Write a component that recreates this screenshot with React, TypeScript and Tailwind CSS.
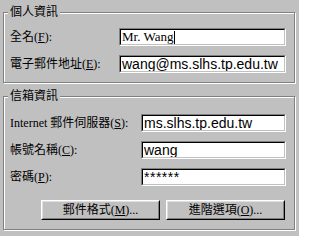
import React from "react";

const labelFont = { fontFamily: '"Liberation Serif", "Noto Sans CJK TC", serif' };

function Field({ children, serif, width }: { children: React.ReactNode; serif?: boolean; width: string }) {
  return (
    <div className={`${width} h-[18px] border border-t-[#808080] border-l-[#808080] border-b-white border-r-white`}>
      <div
        className={`h-full w-full bg-white border border-t-black border-l-black border-b-[#c0c0c0] border-r-[#c0c0c0] flex items-center pl-[1px] text-black whitespace-nowrap overflow-hidden ${
          serif
            ? "font-['Liberation_Serif',serif] text-[13px] leading-[14px]"
            : "font-['Liberation_Sans',Arial,sans-serif] text-[14px] leading-[14px]"
        }`}
      >
        {children}
      </div>
    </div>
  );
}

function Label({ text, k, width }: { text: string; k: string; width: string }) {
  return (
    <div className={`${width} text-[12px] leading-[14px] text-black whitespace-nowrap`} style={labelFont}>
      {text}(<span className="underline underline-offset-[1px] decoration-1">{k}</span>):
    </div>
  );
}

function Group({ title, height, className, children }: { title: string; height: string; className?: string; children: React.ReactNode }) {
  return (
    <div
      className={`relative ${height} ${className ?? ""} border border-[#808080] shadow-[inset_1px_1px_0_#fff,1px_1px_0_#fff]`}
    >
      <div
        className="absolute left-[4px] top-[-8px] px-[2px] bg-[#c0c0c0] text-[12px] leading-[14px] text-black"
        style={labelFont}
      >
        {title}
      </div>
      {children}
    </div>
  );
}

function Button({ text, k }: { text: string; k: string }) {
  return (
    <div className="w-[119px] h-[20px] border border-t-white border-l-white border-b-black border-r-black">
      <div
        className="h-full w-full border border-t-[#dfdfdf] border-l-[#dfdfdf] border-b-[#808080] border-r-[#808080] flex items-center justify-center text-[12px] leading-[14px] text-black whitespace-nowrap"
        style={labelFont}
      >
        {text}(<span className="underline underline-offset-[1px] decoration-1">{k}</span>)...
      </div>
    </div>
  );
}

export default function App() {
  return (
    <div className="w-[299px] h-[236px] bg-[#c0c0c0] pt-[12px] pl-[3px] overflow-hidden select-none">
      <div className="w-[292px]">
        <Group title="個人資訊" height="h-[71px]">
          <div className="flex flex-col gap-[9px] pt-[15px] pl-[6px]">
            <div className="flex items-center">
              <Label text="全名" k="F" width="w-[109px]" />
              <Field serif width="w-[167px]">
                <span>Mr. Wang</span>
                <span className="inline-block w-[1px] h-[13px] bg-black ml-[1px]" />
              </Field>
            </div>
            <div className="flex items-center">
              <Label text="電子郵件地址" k="E" width="w-[109px]" />
              <Field width="w-[167px]">wang@ms.slhs.tp.edu.tw</Field>
            </div>
          </div>
        </Group>
        <Group title="信箱資訊" height="h-[134px]" className="mt-[13px]">
          <div className="flex flex-col gap-[9px] pt-[17px] pl-[6px]">
            <div className="flex items-center">
              <Label text="Internet 郵件伺服器" k="S" width="w-[131px]" />
              <Field width="w-[145px]">ms.slhs.tp.edu.tw</Field>
            </div>
            <div className="flex items-center">
              <Label text="帳號名稱" k="C" width="w-[131px]" />
              <Field width="w-[145px]">wang</Field>
            </div>
            <div className="flex items-center">
              <Label text="密碼" k="P" width="w-[131px]" />
              <Field width="w-[145px]">
                <span className="text-[14px] tracking-[0.5px]">******</span>
              </Field>
            </div>
          </div>
          <div className="flex gap-[6px] pl-[37px] mt-[14px]">
            <Button text="郵件格式" k="M" />
            <Button text="進階選項" k="O" />
          </div>
        </Group>
      </div>
    </div>
  );
}
